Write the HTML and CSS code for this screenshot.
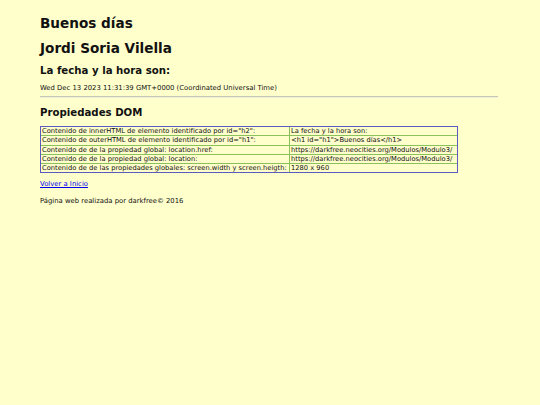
FILE: index.html
```html
<!DOCTYPE html>
<html lang="es">
<head>
<meta charset="utf-8">
<title>Propiedades DOM</title>
<link rel="stylesheet" href="styles.css">
</head>
<body>
<main class="page">
  <h1 id="h1" class="title">Buenos días</h1>
  <h1 class="title">Jordi Soria Vilella</h1>
  <h2 id="h2" class="subtitle">La fecha y la hora son:</h2>
  <p class="date">Wed Dec 13 2023 11:31:39 GMT+0000 (Coordinated Universal Time)</p>
  <hr class="rule">
  <h2 class="subtitle section">Propiedades DOM</h2>
  <table class="props">
    <tr><td>Contenido de innerHTML de elemento identificado por id="h2":</td><td>La fecha y la hora son:</td></tr>
    <tr><td>Contenido de outerHTML de elemento identificado por id="h1":</td><td>&lt;h1 id="h1"&gt;Buenos días&lt;/h1&gt;</td></tr>
    <tr><td>Contenido de de la propiedad global: location.href:</td><td>https://darkfree.neocities.org/Modulos/Modulo3/</td></tr>
    <tr><td>Contenido de de la propiedad global: location:</td><td>https://darkfree.neocities.org/Modulos/Modulo3/</td></tr>
    <tr><td>Contenido de de las propiedades globales: screen.width y screen.heigth:</td><td>1280 x 960</td></tr>
  </table>
  <p class="back"><a href="#">Volver a Inicio</a></p>
  <p class="footer">Página web realizada por darkfree© 2016</p>
</main>
</body>
</html>
```
FILE: styles.css
```css
html, body {
  margin: 0;
  padding: 0;
  background: #ffffcc;
}
body {
  font-family: "DejaVu Sans", Verdana, sans-serif;
  font-size: 6.85px;
  color: #111;
}
.page {
  padding: 6px 42px 0 40px;
}
.title {
  font-size: 13.6px;
  font-weight: bold;
  margin: 9px 0;
}
.subtitle {
  font-size: 10.2px;
  font-weight: bold;
  margin: 8.4px 0;
}
.date {
  margin: 8px 0 3.5px;
}
.rule {
  border: 0;
  border-top: 1px solid #c8c8b0;
  border-bottom: 1px solid #eeeedd;
  margin: 0;
}
.section {
  margin-top: 9px;
}
.props {
  border-collapse: separate;
  border-spacing: 0;
  border: 1px solid #5a5ac0;
  font-size: 6.72px;
  width: 418px;
  table-layout: fixed;
}
.props td {
  padding: 0 1px;
  border-right: 1px solid #8cc05a;
  border-bottom: 1px solid #8cc05a;
  white-space: nowrap;
  overflow: hidden;
  line-height: 8.2px;
}
.props td:first-child {
  width: 246px;
}
.props td:last-child {
  border-right: 0;
}
.props tr:last-child td {
  border-bottom: 0;
}
.back {
  margin: 6.75px 0;
}
.back a {
  color: #0000ee;
}
.footer {
  margin: 8.5px 0;
}
```
